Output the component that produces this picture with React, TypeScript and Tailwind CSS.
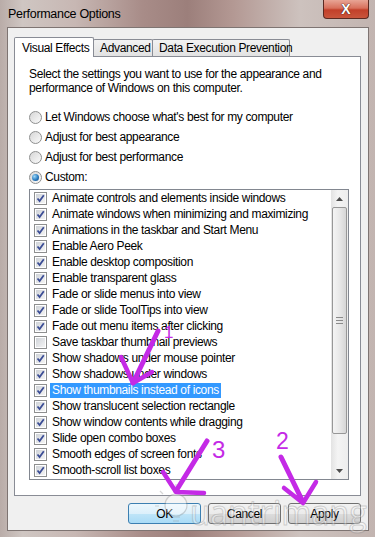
import React from 'react';

type Item = { label: string; checked: boolean; selected?: boolean };

const items: Item[] = [
  { label: 'Animate controls and elements inside windows', checked: true },
  { label: 'Animate windows when minimizing and maximizing', checked: true },
  { label: 'Animations in the taskbar and Start Menu', checked: true },
  { label: 'Enable Aero Peek', checked: true },
  { label: 'Enable desktop composition', checked: true },
  { label: 'Enable transparent glass', checked: true },
  { label: 'Fade or slide menus into view', checked: true },
  { label: 'Fade or slide ToolTips into view', checked: true },
  { label: 'Fade out menu items after clicking', checked: true },
  { label: 'Save taskbar thumbnail previews', checked: false },
  { label: 'Show shadows under mouse pointer', checked: true },
  { label: 'Show shadows under windows', checked: true },
  { label: 'Show thumbnails instead of icons', checked: true, selected: true },
  { label: 'Show translucent selection rectangle', checked: true },
  { label: 'Show window contents while dragging', checked: true },
  { label: 'Slide open combo boxes', checked: true },
  { label: 'Smooth edges of screen fonts', checked: true },
  { label: 'Smooth-scroll list boxes', checked: true },
];

const radios = [
  { label: "Let Windows choose what's best for my computer", on: false },
  { label: 'Adjust for best appearance', on: false },
  { label: 'Adjust for best performance', on: false },
  { label: 'Custom:', on: true },
];

const CheckBox: React.FC<{ checked: boolean }> = ({ checked }) => (
  <span className="w-[13px] h-[13px] shrink-0 border border-[#8e8f8f] bg-white p-px flex">
    <span className="flex-1 bg-[linear-gradient(135deg,#cfd3d8,#f4f4f4)] relative">
      {checked && (
        <svg width="11" height="11" viewBox="0 0 11 11" className="absolute -left-px -top-px">
          <path d="M2.5 5.5 L4.6 8 L8.8 2.2" fill="none" stroke="#3b4d95" strokeWidth="1.8" />
        </svg>
      )}
    </span>
  </span>
);

const Radio: React.FC<{ on: boolean }> = ({ on }) => (
  <span className="w-[13px] h-[13px] shrink-0 rounded-full border border-[#8e8f8f] bg-[linear-gradient(135deg,#d6d6d6,#fbfbfb)] flex items-center justify-center">
    {on && (
      <span className="w-[7px] h-[7px] rounded-full bg-[radial-gradient(circle_at_35%_35%,#9ed8f8,#2a7cc0_55%,#0d3f78)]" />
    )}
  </span>
);

const Button: React.FC<{ label: string; primary?: boolean }> = ({ label, primary }) => (
  <div
    className={`w-[73px] h-[21px] rounded-[3px] border flex items-center justify-center text-[12px] text-black ${
      primary
        ? 'border-[#3c7fb1] bg-[linear-gradient(180deg,#ecf7fd_0%,#dcf0fb_50%,#bfe5f8_51%,#a9dbf6_100%)]'
        : 'border-[#707070] bg-[linear-gradient(180deg,#f2f2f2_0%,#ebebeb_50%,#dddddd_51%,#cfcfcf_100%)]'
    }`}
  >
    {label}
  </div>
);

export default function App() {
  return (
    <div
      className="w-[375px] h-[537px] relative overflow-hidden flex flex-col bg-[linear-gradient(90deg,#b9aca8_0%,#cfc6c2_6%,#c7b7b3_20%,#a88c88_38%,#9c7f7b_50%,#b39893_62%,#cdc2be_80%,#c2b4b0_100%)]"
      style={{ fontFamily: '"Liberation Sans", Arial, sans-serif' }}
    >
      {/* title bar */}
      <div className="h-[27px] flex items-start shrink-0">
        <div className="pl-[8px] pt-[6px] text-[12.5px] tracking-[-0.3px] text-black leading-[16px]">Performance Options</div>
        <div className="ml-auto mr-[6px] w-[46px] h-[19px] rounded-b-[4px] border border-t-0 border-[#5b2a22] bg-[linear-gradient(180deg,#e8a595_0%,#d8705c_45%,#c2402a_55%,#c9553c_100%)] flex items-center justify-center">
          <span
            className="text-white font-bold text-[14px] leading-none"
            style={{ textShadow: '0 0 1px #3a1510, 0 0 1px #3a1510' }}
          >
            X
          </span>
        </div>
      </div>

      {/* client area */}
      <div className="ml-[7px] mr-[6px] h-[504px] border border-[#7e7472] bg-[#f0f0f0] flex flex-col tracking-[-0.35px]">
        {/* tabs */}
        <div className="ml-[6px] mt-[8px] h-[20px] flex items-end text-[12px] text-black whitespace-nowrap">
          <div className="relative z-10 w-[80px] h-[20px] -mb-px bg-white border border-b-0 border-[#898c95] rounded-t-[2px] pl-[7px] pt-[2px] leading-[16px]">
            Visual Effects
          </div>
          <div className="w-[60px] h-[17px] -ml-px border border-b-0 border-[#898c95] rounded-t-[2px] bg-[linear-gradient(180deg,#f2f2f2,#e2e2e2)] pl-[6px] leading-[16px]">
            Advanced
          </div>
          <div className="w-[138px] h-[17px] -ml-px border border-b-0 border-[#898c95] rounded-t-[2px] bg-[linear-gradient(180deg,#f2f2f2,#e2e2e2)] pl-[6px] leading-[16px]">
            Data Execution Prevention
          </div>
        </div>

        {/* tab panel */}
        <div className="ml-[6px] w-[347px] h-[440px] border border-[#898c95] bg-white flex flex-col text-[12px] text-black">
          <div className="ml-[14px] mt-[10px] leading-[14px]">
            <div>Select the settings you want to use for the appearance and</div>
            <div>performance of Windows on this computer.</div>
          </div>

          <div className="mt-[12px] ml-[14px] flex flex-col">
            {radios.map((r) => (
              <div key={r.label} className="h-[20px] flex items-center gap-[3px]">
                <Radio on={r.on} />
                <span>{r.label}</span>
              </div>
            ))}
          </div>

          {/* list box */}
          <div className="mt-[2px] ml-[14px] w-[320px] h-[291px] border border-[#828790] bg-white flex">
            <div className="flex-1 flex flex-col">
              {items.map((it) => (
                <div key={it.label} className="h-[16px] flex items-center pl-[4px]">
                  <CheckBox checked={it.checked} />
                  <span
                    className={`ml-[3px] px-[2px] leading-[15px] whitespace-nowrap ${
                      it.selected ? 'bg-[#3399ff] text-white' : ''
                    }`}
                  >
                    {it.label}
                  </span>
                </div>
              ))}
            </div>

            {/* scrollbar */}
            <div className="w-[17px] flex flex-col bg-[linear-gradient(90deg,#e3e3e3,#f4f4f4_40%,#ededed)]">
              <div className="h-[17px] flex items-center justify-center">
                <svg width="7" height="4" viewBox="0 0 7 4">
                  <path d="M0 4 L3.5 0 L7 4 Z" fill="#4d4d4d" />
                </svg>
              </div>
              <div className="mx-px h-[227px] rounded-[2px] border border-[#979797] bg-[linear-gradient(90deg,#f4f4f4,#e8e8e8_50%,#d6d6d6)] flex items-center justify-center">
                <div className="flex flex-col gap-[2px]">
                  <span className="w-[7px] h-px bg-[#8a8a8a]" />
                  <span className="w-[7px] h-px bg-[#8a8a8a]" />
                  <span className="w-[7px] h-px bg-[#8a8a8a]" />
                </div>
              </div>
              <div className="flex-1" />
              <div className="h-[17px] flex items-center justify-center">
                <svg width="7" height="4" viewBox="0 0 7 4">
                  <path d="M0 0 L7 0 L3.5 4 Z" fill="#4d4d4d" />
                </svg>
              </div>
            </div>
          </div>
        </div>

        {/* buttons */}
        <div className="mt-[7px] ml-[120px] flex gap-[7px]">
          <Button label="OK" primary />
          <Button label="Cancel" />
          <Button label="Apply" />
        </div>
      </div>

      {/* watermark + annotations */}
      <svg className="absolute inset-0 pointer-events-none" width="375" height="537" viewBox="0 0 375 537">
        <g opacity="0.35" stroke="#8c8c8c" fill="#ffffff">
          <circle cx="176" cy="505" r="11" strokeWidth="1.2" />
          <path d="M172 517 L180 517 M173 521 L179 521" strokeWidth="1.2" />
          <path d="M176 488 L176 484 M163 494 L160 491 M189 494 L192 491 M159 506 L155 506 M193 506 L197 506" strokeWidth="1.2" />
          <text
            x="190"
            y="525"
            fontSize="34"
            textLength="177"
            lengthAdjust="spacingAndGlyphs"
            strokeWidth="1"
            style={{ fontFamily: '"Open Sans", sans-serif' }}
          >
            uantrimang
          </text>
        </g>

        <g stroke="#c42ae6" strokeLinecap="round" strokeLinejoin="round" fill="none">
          {/* arrow 1 */}
          <path d="M158 331 L133 383" strokeWidth="5" />
          <path d="M121 357 L133 383 L152 372" strokeWidth="4.5" />
          {/* arrow 3 */}
          <path d="M207 441 L176 491" strokeWidth="5" />
          <path d="M163 472 L176 492 L204 493" strokeWidth="4.5" />
          {/* arrow 2 */}
          <path d="M281 457 L302 500" strokeWidth="5" />
          <path d="M284 488 L303 503 L316 482" strokeWidth="4.5" />
        </g>
        <g fill="#c42ae6">
          <text x="164" y="338" fontSize="17">1</text>
          <text x="212" y="458" fontSize="24">3</text>
          <text x="276" y="449" fontSize="23">2</text>
        </g>
      </svg>
    </div>
  );
}
